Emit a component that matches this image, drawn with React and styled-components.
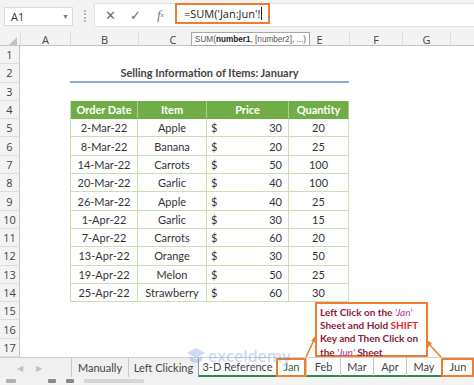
import React from 'react';
import styled, { createGlobalStyle } from 'styled-components';

const GlobalStyle = createGlobalStyle`
  html, body { margin: 0; padding: 0; background: #fff; }
  body { font-family: "Open Sans", "Noto Sans", sans-serif; }
  * { box-sizing: border-box; }
`;

const COLS = [50, 68, 69, 82, 60, 53, 48, 60];
const LETTERS = ['A', 'B', 'C', '', 'E', 'F', 'G', ''];
const GRID = `20px ${COLS.map((c) => c + 'px').join(' ')}`;
const CALIBRI = `"Lato", "Liberation Sans", sans-serif`;
const ORANGE = '#ed7d31';
const GREEN = '#70ad47';
const TBORDER = '#c9e0b6';

const Screen = styled.div`
  position: relative;
  width: 474px;
  height: 385px;
  overflow: hidden;
  background: #fff;
  display: flex;
  flex-direction: column;
`;

const FormulaBar = styled.div`
  height: 32px;
  flex: none;
  display: flex;
  align-items: center;
  background: #f3f3f3;
  padding-left: 4px;
`;

const NameBox = styled.div`
  width: 69px;
  height: 19px;
  background: #fff;
  border: 1px solid #dadada;
  display: flex;
  align-items: center;
  justify-content: space-between;
  padding: 0 3px 0 6px;
  font-size: 11px;
  color: #333;
`;

const Caret = styled.span`
  font-size: 7px;
  color: #777;
`;

const Grip = styled.div`
  width: 2px;
  height: 12px;
  margin: 0 8px 0 11px;
  border-left: 2px dotted #b8b8b8;
`;

const FxArea = styled.div`
  flex: 1;
  height: 24px;
  align-self: flex-start;
  margin-top: 3px;
  display: flex;
  align-items: flex-start;
  background: #fff;
  border: 1px solid #e2e2e2;
  border-right: none;
`;

const FxButton = styled.span`
  width: 25px;
  height: 22px;
  display: flex;
  align-items: center;
  justify-content: center;
  color: #6f6f6f;
  font-size: ${(p) => p.$size || 13}px;
  font-style: ${(p) => (p.$italic ? 'italic' : 'normal')};
  font-family: ${(p) => (p.$serif ? '"Liberation Serif", serif' : 'inherit')};
`;

const FormulaHighlight = styled.div`
  margin-left: 2px;
  margin-top: -1px;
  width: 95px;
  height: 21px;
  border: 2px solid ${ORANGE};
  display: flex;
  align-items: center;
  padding-left: 7px;
  font-size: 11px;
  color: #222;
`;

const Cursor = styled.span`
  display: inline-block;
  width: 1px;
  height: 13px;
  background: #222;
  margin-left: 1px;
`;

const ColHeaderRow = styled.div`
  height: 14px;
  flex: none;
  display: grid;
  grid-template-columns: ${GRID};
  background: #f3f3f3;
  border-bottom: 1px solid #c6c6c6;
  position: relative;
`;

const ColHead = styled.div`
  display: flex;
  align-items: center;
  justify-content: center;
  font-size: 11px;
  color: #444;
  border-left: 1px solid #dcdcdc;
`;

const Corner = styled.div`
  position: relative;
  &::after {
    content: '';
    position: absolute;
    right: 3px;
    bottom: 2px;
    border-style: solid;
    border-width: 0 0 8px 8px;
    border-color: transparent transparent #c4c4c4 transparent;
  }
`;

const Tooltip = styled.div`
  position: absolute;
  left: 191px;
  top: 0px;
  height: 14px;
  padding: 0 3px;
  background: #fff;
  border: 1px solid #a8a8a8;
  font-family: "Liberation Sans", sans-serif;
  font-size: 8.2px;
  color: #555;
  display: flex;
  align-items: center;
  white-space: nowrap;
  b { color: #222; }
`;

const Sheet = styled.div`
  flex: none;
  display: flex;
  flex-direction: column;
`;

const Row = styled.div`
  height: 18.3px;
  display: grid;
  grid-template-columns: ${GRID};
`;

const RowHead = styled.div`
  background: #f3f3f3;
  border-right: 1px solid #c6c6c6;
  border-bottom: 1px solid #dcdcdc;
  display: flex;
  align-items: center;
  justify-content: center;
  font-size: 11px;
  color: #444;
`;

const Cell = styled.div`
  font-family: ${CALIBRI};
  font-size: 11px;
  color: #333;
  display: flex;
  align-items: center;
  justify-content: ${(p) => p.$justify || 'center'};
  padding: 0 ${(p) => (p.$pad ? 6 : 0)}px 0 ${(p) => (p.$pad ? 4 : 0)}px;
  white-space: nowrap;
  ${(p) =>
    p.$table &&
    `border-right: 1px solid ${TBORDER}; border-bottom: 1px solid ${TBORDER};`}
  ${(p) => p.$first && `border-left: 1px solid ${TBORDER};`}
  ${(p) =>
    p.$head &&
    `background: ${GREEN}; color: #fff; font-weight: 700; border-right: 1px solid #a9d08e; border-bottom: 1px solid ${GREEN};`}
`;

const Title = styled.div`
  grid-column: span 4;
  font-family: ${CALIBRI};
  font-size: 11px;
  font-weight: 700;
  color: #444;
  display: flex;
  align-items: center;
  justify-content: center;
  border-bottom: 2px solid #8eaadb;
`;

const TabBar = styled.div`
  height: 20px;
  flex: none;
  display: flex;
  background: #f0f0f0;
  border-top: 1px solid #d0d0d0;
`;

const Nav = styled.div`
  width: 71px;
  display: flex;
  align-items: center;
  gap: 13px;
  padding-left: 17px;
  color: #c2c2c2;
  font-size: 8px;
`;

const Tab = styled.div`
  width: ${(p) => p.$w}px;
  flex: none;
  display: flex;
  align-items: center;
  justify-content: center;
  font-family: ${CALIBRI};
  font-size: 11px;
  color: ${(p) => (p.$green ? '#217346' : '#444')};
  border-left: 1px solid ${(p) => (p.$active ? '#9a9a9a' : '#c8c8c8')};
  background: ${(p) => (p.$white ? '#fff' : 'transparent')};
  ${(p) => p.$white && `border-bottom: 2px solid #2f8a4f;`}
  ${(p) => p.$outline && `outline: 2px solid ${ORANGE}; outline-offset: -2px; position: relative; z-index: 1;`}
  white-space: nowrap;
`;

const StatusBar = styled.div`
  flex: 1;
  background: #f3f3f3;
  display: flex;
  align-items: flex-start;
  gap: 10px;
  padding: 2px 0 0 6px;
`;

const StatusMark = styled.span`
  display: inline-block;
  width: ${(p) => p.$w}px;
  height: 4px;
  margin-left: ${(p) => p.$ml || 0}px;
  background: ${(p) => p.$c || '#b0b0b0'};
  border-radius: 1px;
`;

const Callout = styled.div`
  position: absolute;
  left: 315px;
  top: 302px;
  width: 113px;
  height: 55px;
  border: 2px solid ${ORANGE};
  background: #fff;
  padding: 2px 0 0 3px;
  font-family: ${CALIBRI};
  font-size: 10px;
  font-weight: 700;
  line-height: 13.2px;
  color: #8a1c3c;
  white-space: nowrap;
  z-index: 3;
`;

const Quote = styled.i`
  color: #b04aa8;
  font-weight: 500;
`;

const Shift = styled.span`
  color: #e2262e;
`;

const Watermark = styled.div`
  position: absolute;
  left: 186px;
  top: 345px;
  display: flex;
  align-items: center;
  gap: 2px;
  opacity: 0.3;
  font-family: "Open Sans", sans-serif;
  font-size: 16px;
  font-weight: 600;
  color: #5b8fd6;
  z-index: 2;
  pointer-events: none;
`;

const ArrowLayer = styled.svg`
  position: absolute;
  left: 0;
  top: 0;
  z-index: 4;
  pointer-events: none;
`;

const DATA = [
  ['2-Mar-22', 'Apple', 30, 20],
  ['8-Mar-22', 'Banana', 20, 25],
  ['14-Mar-22', 'Carrots', 50, 100],
  ['20-Mar-22', 'Garlic', 40, 100],
  ['26-Mar-22', 'Apple', 40, 25],
  ['1-Apr-22', 'Garlic', 30, 15],
  ['7-Apr-22', 'Carrots', 60, 20],
  ['13-Apr-22', 'Orange', 30, 50],
  ['19-Apr-22', 'Melon', 50, 25],
  ['25-Apr-22', 'Strawberry', 60, 30],
];

function Blank({ n }) {
  return Array.from({ length: n }, (_, i) => <Cell key={'b' + i} />);
}

function renderRow(r) {
  if (r === 2) {
    return (
      <>
        <Cell />
        <Title>Selling Information of Items: January</Title>
        <Blank n={3} />
      </>
    );
  }
  if (r === 4) {
    return (
      <>
        <Cell />
        <Cell $table $first $head>Order Date</Cell>
        <Cell $table $head>Item</Cell>
        <Cell $table $head>Price</Cell>
        <Cell $table $head>Quantity</Cell>
        <Blank n={3} />
      </>
    );
  }
  if (r >= 5 && r <= 14) {
    const [d, item, price, qty] = DATA[r - 5];
    return (
      <>
        <Cell />
        <Cell $table $first>{d}</Cell>
        <Cell $table>{item}</Cell>
        <Cell $table $justify="space-between" $pad>
          <span>$</span>
          <span>{price}</span>
        </Cell>
        <Cell $table>{qty}</Cell>
        <Blank n={3} />
      </>
    );
  }
  return <Blank n={8} />;
}

export default function App() {
  const rows = Array.from({ length: 17 }, (_, i) => i + 1);
  return (
    <>
      <GlobalStyle />
      <Screen>
        <FormulaBar>
          <NameBox>
            <span>A1</span>
            <Caret>▼</Caret>
          </NameBox>
          <Grip />
          <FxArea>
            <FxButton style={{ marginLeft: 3 }}>✕</FxButton>
            <FxButton>✓</FxButton>
            <FxButton $italic $serif $size={12}>
              f<sub style={{ fontSize: 7 }}>x</sub>
            </FxButton>
            <FormulaHighlight>
              =SUM('Jan:Jun'!
              <Cursor />
            </FormulaHighlight>
          </FxArea>
        </FormulaBar>

        <ColHeaderRow>
          <Corner />
          {LETTERS.map((l, i) => (
            <ColHead key={i}>{l}</ColHead>
          ))}
          <Tooltip>
            SUM(<b>number1</b>, [number2], ...)
          </Tooltip>
        </ColHeaderRow>

        <Sheet>
          {rows.map((r) => (
            <Row key={r}>
              <RowHead>{r}</RowHead>
              {renderRow(r)}
            </Row>
          ))}
        </Sheet>

        <TabBar>
          <Nav>
            <span>◀</span>
            <span>▶</span>
          </Nav>
          <Tab $w={57}>Manually</Tab>
          <Tab $w={70}>Left Clicking</Tab>
          <Tab $w={78} $white $active>3-D Reference</Tab>
          <Tab $w={30} $white $green $outline>Jan</Tab>
          <Tab $w={34} $white>Feb</Tab>
          <Tab $w={33} $white>Mar</Tab>
          <Tab $w={33} $white>Apr</Tab>
          <Tab $w={35} $white>May</Tab>
          <Tab $w={33} $white $outline>Jun</Tab>
        </TabBar>

        <StatusBar>
          <StatusMark $w={10} />
          <StatusMark $w={8} $ml={22} $c="#8a8a8a" />
          <StatusMark $w={8} $c="#8a8a8a" />
          <StatusMark $w={60} $c="#d6d6d6" />
        </StatusBar>

        <Watermark>
          <svg width="20" height="18" viewBox="0 0 20 18">
            <path d="M10 1 L19 6 L10 11 L1 6 Z" fill="#5b8fd6" />
            <path d="M4 9 L4 14 Q10 18 16 14 L16 9 L10 12.5 Z" fill="#5b8fd6" />
          </svg>
          <span>exceldemy</span>
        </Watermark>

        <Callout>
          <div>
            Left Click on the <Quote>'Jan'</Quote>
          </div>
          <div>
            Sheet and Hold <Shift>SHIFT</Shift>
          </div>
          <div>Key and Then Click on</div>
          <div>
            the <Quote>'Jun'</Quote> Sheet
          </div>
        </Callout>

        <ArrowLayer width="474" height="385" viewBox="0 0 474 385">
          <line x1="306" y1="357" x2="314" y2="340" stroke={ORANGE} strokeWidth="1.6" />
          <path d="M316 335 L311 341 L316.5 342.5 Z" fill={ORANGE} />
          <line x1="427" y1="342" x2="441" y2="357" stroke={ORANGE} strokeWidth="1.6" />
          <path d="M426 340 L432 343 L428 347 Z" fill={ORANGE} />
        </ArrowLayer>
      </Screen>
    </>
  );
}
